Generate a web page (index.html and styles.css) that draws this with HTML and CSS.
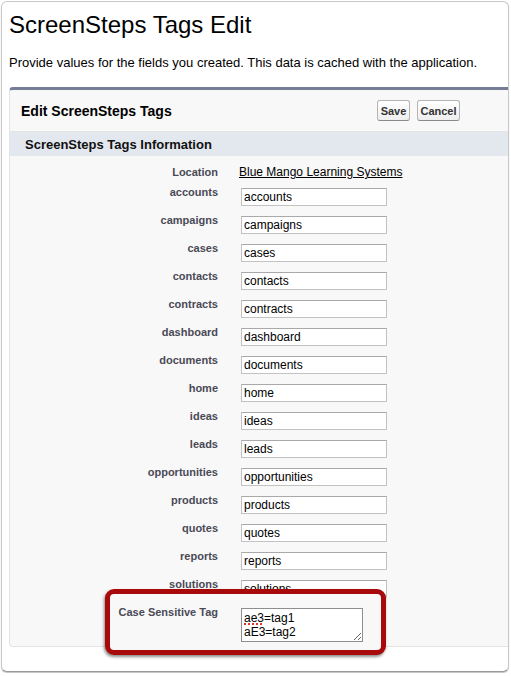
FILE: index.html
```html
<!DOCTYPE html>
<html lang="en">
<head>
<meta charset="utf-8">
<title>ScreenSteps Tags Edit</title>
<link rel="stylesheet" href="styles.css">
</head>
<body>
<div class="window">
  <h1 class="page-title">ScreenSteps Tags Edit</h1>
  <p class="intro">Provide values for the fields you created. This data is cached with the application.</p>

  <div class="panel">
    <div class="panel-header">
      <h2 class="panel-title">Edit ScreenSteps Tags</h2>
      <div class="buttons">
        <button class="btn btn--save" type="button">Save</button>
        <button class="btn btn--cancel" type="button">Cancel</button>
      </div>
    </div>
    <div class="subheader">ScreenSteps Tags Information</div>
    <div class="panel-body">
      <div class="field-row field-row--short">
        <label class="field-label">Location</label>
        <a class="field-link" href="#">Blue Mango Learning Systems</a>
      </div>
      <div class="field-row"><label class="field-label">accounts</label><input class="field-input" value="accounts"></div>
      <div class="field-row"><label class="field-label">campaigns</label><input class="field-input" value="campaigns"></div>
      <div class="field-row"><label class="field-label">cases</label><input class="field-input" value="cases"></div>
      <div class="field-row"><label class="field-label">contacts</label><input class="field-input" value="contacts"></div>
      <div class="field-row"><label class="field-label">contracts</label><input class="field-input" value="contracts"></div>
      <div class="field-row"><label class="field-label">dashboard</label><input class="field-input" value="dashboard"></div>
      <div class="field-row"><label class="field-label">documents</label><input class="field-input" value="documents"></div>
      <div class="field-row"><label class="field-label">home</label><input class="field-input" value="home"></div>
      <div class="field-row"><label class="field-label">ideas</label><input class="field-input" value="ideas"></div>
      <div class="field-row"><label class="field-label">leads</label><input class="field-input" value="leads"></div>
      <div class="field-row"><label class="field-label">opportunities</label><input class="field-input" value="opportunities"></div>
      <div class="field-row"><label class="field-label">products</label><input class="field-input" value="products"></div>
      <div class="field-row"><label class="field-label">quotes</label><input class="field-input" value="quotes"></div>
      <div class="field-row"><label class="field-label">reports</label><input class="field-input" value="reports"></div>
      <div class="field-row"><label class="field-label">solutions</label><input class="field-input" value="solutions"></div>
      <div class="field-row field-row--front">
        <label class="field-label">Case Sensitive Tag</label>
        <div class="tag-area" role="textbox" aria-multiline="true"><span class="misspelled">ae3</span>=tag1<br>aE3=tag2</div>
      </div>
    </div>
  </div>

  <div class="highlight"></div>
</div>
</body>
</html>
```

FILE: styles.css
```css
html, body {
  margin: 0;
  padding: 0;
  background: #ffffff;
}

body {
  font-family: "Liberation Sans", Arial, Helvetica, sans-serif;
  color: #000;
}

.window {
  position: relative;
  box-sizing: border-box;
  margin: 1px;
  width: 508px;
  height: 671px;
  border: 1px solid #c8c8c8;
  border-bottom-color: #9a9a9a;
  border-radius: 6px;
  background: #ffffff;
  overflow: hidden;
  box-shadow: 0 1px 1px rgba(0, 0, 0, 0.25);
}

.page-title {
  margin: 9px 0 0 7px;
  font-size: 24px;
  line-height: 28px;
  font-weight: normal;
  color: #000;
}

.intro {
  margin: 16px 0 0 7px;
  font-size: 13px;
  line-height: 15px;
  color: #000;
}

.panel {
  margin: 17px -12px 0 7px;
  border-top: 3px solid #747d95;
  border-left: 1px solid #e2e4e6;
  border-bottom: 1px solid #e2e4e6;
  border-radius: 4px 0 0 4px;
  background: #f8f8f8;
}

.panel-header {
  display: flex;
  align-items: center;
  height: 42px;
  box-sizing: border-box;
  padding-left: 11px;
  border-bottom: 1px solid #e2e4e6;
}

.panel-title {
  margin: 0;
  width: 356px;
  font-size: 14px;
  line-height: 16px;
  font-weight: bold;
  color: #000;
}

.buttons {
  display: flex;
  gap: 7px;
}

.btn {
  box-sizing: border-box;
  height: 21px;
  padding: 0;
  font-family: "Liberation Sans", Arial, Helvetica, sans-serif;
  font-size: 11px;
  font-weight: bold;
  color: #333;
  background: linear-gradient(#ffffff, #eeeeee);
  border: 1px solid #b5b5b5;
  border-bottom-color: #8a8a8a;
  border-radius: 3px;
}

.btn--save {
  width: 33px;
}

.btn--cancel {
  width: 43px;
}

.subheader {
  height: 24px;
  line-height: 25px;
  padding-left: 15px;
  background: #e3e8ef;
  font-size: 13px;
  font-weight: bold;
  color: #111;
}

.panel-body {
  padding: 8px 0 4px;
}

.field-row {
  display: grid;
  grid-template-columns: 208px 1fr;
  column-gap: 21px;
  height: 28px;
  align-items: start;
}

.field-row--short {
  height: 20px;
}

.field-row--front {
  position: relative;
  z-index: 2;
  height: 38px;
}

.field-label {
  padding-top: 2px;
  text-align: right;
  font-size: 11px;
  line-height: 13px;
  font-weight: bold;
  color: #4a4a56;
}

.field-link {
  padding-top: 1px;
  font-size: 12px;
  line-height: 15px;
  color: #000;
  text-decoration: underline;
  justify-self: start;
}

.field-input {
  box-sizing: border-box;
  margin: 4px 0 0 2px;
  width: 146px;
  height: 18px;
  padding: 0 2px;
  font-family: "Liberation Sans", Arial, Helvetica, sans-serif;
  font-size: 12px;
  color: #000;
  background: #fff;
  border: 1px solid #c2c2c2;
  border-top-color: #a9a9a9;
  border-radius: 0;
  outline: none;
}

.tag-area {
  box-sizing: border-box;
  margin: 4px 0 0 2px;
  width: 122px;
  height: 34px;
  padding: 2px 2px;
  font-size: 12px;
  line-height: 14px;
  color: #000;
  background: #fff;
  border: 1px solid #8e8e8e;
  resize: both;
  overflow: hidden;
}

.misspelled {
  text-decoration: underline dotted #e2322c;
  text-decoration-thickness: 1.5px;
  text-underline-offset: 1px;
}

.highlight {
  position: absolute;
  left: 103px;
  top: 587px;
  box-sizing: border-box;
  width: 281px;
  height: 66px;
  border: 5px solid #a80a0c;
  border-radius: 9px;
  background: #f8f8f8;
  box-shadow: -1px 2px 3px rgba(0, 0, 0, 0.45);
  z-index: 1;
}
```
